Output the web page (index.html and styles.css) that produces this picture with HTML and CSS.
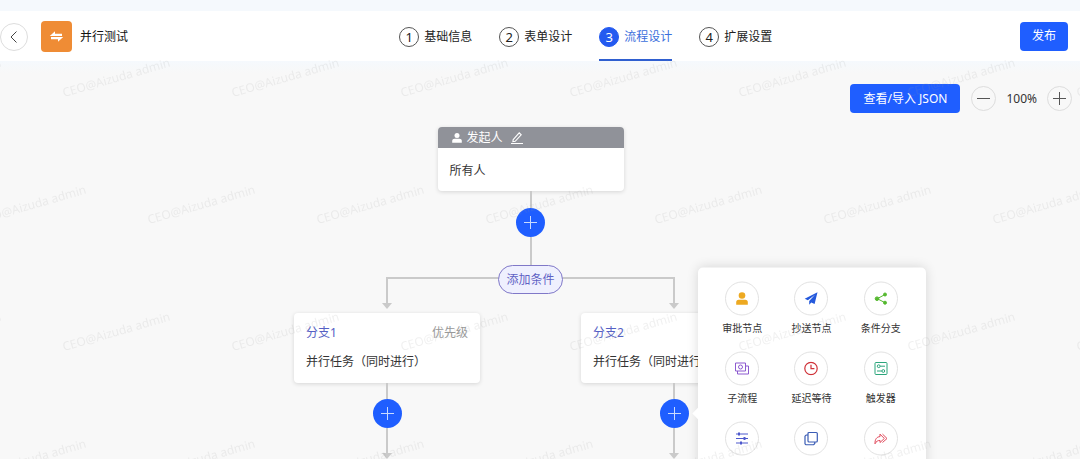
FILE: index.html
```html
<!DOCTYPE html>
<html lang="zh-CN">
<head>
<meta charset="utf-8">
<meta name="viewport" content="width=device-width, initial-scale=1">
<title>并行测试</title>
<link rel="stylesheet" href="styles.css">
</head>
<body>
<header class="header">
  <div class="brand">
    <button class="back" type="button" aria-label="返回">
      <svg width="14" height="14" viewBox="0 0 14 14" fill="none" stroke="#444" stroke-width="1"><path d="M9.500 1.500 4 7l5.500 5.500"/></svg>
    </button>
    <span class="logo">
      <svg width="15" height="15" viewBox="0 0 15 15" fill="#fff"><path d="M.8 6.900 6 2.200v2.500h7v2.200zM14.200 8.100 9 12.800v-2.500H2V8.100z"/></svg>
    </span>
    <h1 class="title">并行测试</h1>
  </div>
  <nav class="steps">
    <a class="step" href="#base"><span class="step-no">1</span>基础信息</a>
    <a class="step" href="#form"><span class="step-no">2</span>表单设计</a>
    <a class="step step-active" href="#flow" aria-current="step"><span class="step-no">3</span>流程设计</a>
    <a class="step" href="#more"><span class="step-no">4</span>扩展设置</a>
  </nav>
  <div class="actions"><button class="primary" type="button">发布</button></div>
</header>

<main class="canvas">
  <div class="toolbar">
    <button class="primary primary-wide" type="button">查看/导入 JSON</button>
    <div class="zoom">
      <button class="zoom-btn" type="button" aria-label="缩小">
        <svg width="13" height="13" viewBox="0 0 13 13" stroke="#555"><path d="M0 6.500h13"/></svg>
      </button>
      <span class="zoom-value">100%</span>
      <button class="zoom-btn" type="button" aria-label="放大">
        <svg width="13" height="13" viewBox="0 0 13 13" stroke="#555"><path d="M0 6.500h13M6.500 0v13"/></svg>
      </button>
    </div>
  </div>

  <div class="flow">
    <section class="card">
      <div class="card-head">
        <svg width="10" height="10" viewBox="0 0 10 10" fill="#fff"><circle cx="5" cy="2.600" r="2.500"/><path d="M.2 9.800V8c0-1.400 1-2.300 2.400-2.300h4.800c1.400 0 2.400.9 2.400 2.300v1.800z"/></svg>
        <span>发起人</span>
        <button class="edit" type="button" aria-label="编辑">
          <svg width="12" height="12" viewBox="0 0 12 12" fill="none" stroke="#fff" stroke-width="1.100"><path d="M2.200 7.600 8.200.9l2 1.900-6 6.500-2.300.4zM0 11.500h12"/></svg>
        </button>
      </div>
      <p class="card-body">所有人</p>
    </section>
    <div class="link">
      <span class="line line-in"></span>
      <button class="add" type="button" aria-label="添加节点"><svg width="13" height="13" viewBox="0 0 13 13" stroke="#c9dbff"><path d="M0 6.500h13M6.500 0v13"/></svg></button>
      <span class="line line-out"></span>
    </div>
    <button class="condition" type="button">添加条件</button>

    <div class="branches">
      <div class="branch">
        <span class="rail rail-first"></span>
        <span class="arrow"></span>
        <section class="card branch-card">
          <div class="branch-head"><span class="branch-name">分支1</span><span class="priority">优先级</span></div>
          <p class="branch-task">并行任务（同时进行）</p>
        </section>
        <div class="link">
          <span class="line line-in"></span>
          <button class="add" type="button" aria-label="添加节点"><svg width="13" height="13" viewBox="0 0 13 13" stroke="#c9dbff"><path d="M0 6.500h13M6.500 0v13"/></svg></button>
          <span class="line line-out"></span>
        </div>
        <span class="arrow"></span>
      </div>
      <div class="branch">
        <span class="rail rail-last"></span>
        <span class="arrow"></span>
        <section class="card branch-card">
          <div class="branch-head"><span class="branch-name">分支2</span></div>
          <p class="branch-task">并行任务（同时进行）</p>
        </section>
        <div class="link">
          <span class="line line-in"></span>
          <div class="anchor">
            <button class="add" type="button" aria-label="添加节点" aria-expanded="true"><svg width="13" height="13" viewBox="0 0 13 13" stroke="#c9dbff"><path d="M0 6.500h13M6.500 0v13"/></svg></button>
            <div class="popover">
              <button class="option" type="button"><span class="option-icon">
                <svg width="14" height="14" viewBox="0 0 14 14" fill="#eda921"><circle cx="7" cy="4" r="3.300"/><path d="M1.200 13.200v-2.600c0-1.500.9-2.400 2.400-2.400h6.800c1.500 0 2.400.9 2.400 2.400v2.600z"/></svg>
              </span>审批节点</button>
              <button class="option" type="button"><span class="option-icon">
                <svg width="14" height="14" viewBox="0 0 14 14" fill="#2459dc"><path d="M13.500.8.700 7.300l3.200 1.500L11 3.200 5.200 9.500v3.800l2.100-2.400 3.300 1.500z"/></svg>
              </span>抄送节点</button>
              <button class="option" type="button"><span class="option-icon">
                <svg width="14" height="14" viewBox="0 0 14 14" fill="#55b92f" stroke="#55b92f"><path d="M11 3 3.300 7.200 11 11.200" fill="none"/><circle cx="11" cy="3" r="1.500"/><circle cx="3" cy="7.200" r="1.800"/><circle cx="11" cy="11.200" r="1.500"/></svg>
              </span>条件分支</button>
              <button class="option" type="button"><span class="option-icon">
                <svg width="14" height="14" viewBox="0 0 14 14" fill="none" stroke="#8d5bd0"><path d="M.5 1.500h10v8H.5zM2.500 9.500v3h11V4.500h-3"/><circle cx="5.500" cy="5.500" r="2"/></svg>
              </span>子流程</button>
              <button class="option" type="button"><span class="option-icon">
                <svg width="14" height="14" viewBox="0 0 14 14" fill="none" stroke="#cf3037" stroke-width="1.200"><circle cx="7" cy="7" r="6.200"/><path d="M7 3.200v4h3.400"/></svg>
              </span>延迟等待</button>
              <button class="option" type="button"><span class="option-icon">
                <svg width="14" height="14" viewBox="0 0 14 14" fill="none" stroke="#2ba57b"><rect x="1" y="1" width="12" height="12" rx="1"/><circle cx="4.700" cy="4.700" r="1.400"/><path d="M6.100 4.700H11M3 9.500h4.900"/><circle cx="9.300" cy="9.500" r="1.400"/></svg>
              </span>触发器</button>
              <button class="option" type="button" aria-label="包容分支"><span class="option-icon">
                <svg width="14" height="14" viewBox="0 0 14 14" fill="none" stroke="#4d58cc"><path d="M1 2.500h12M1 7h12M1 11.500h12"/><path d="M4 1v3M9.500 5.500v3M6 10v3" stroke-width="2"/></svg>
              </span></button>
              <button class="option" type="button" aria-label="并行分支"><span class="option-icon">
                <svg width="14" height="14" viewBox="0 0 14 14" fill="none" stroke="#3a5cb5" stroke-width="1.200"><rect x="4" y="1" width="9.300" height="9.500" rx="1"/><path d="M4 3.500H2.200L1 4.700v7.600l1 1h7.500l1.300-1.300v-1.500"/></svg>
              </span></button>
              <button class="option" type="button" aria-label="路由分支"><span class="option-icon">
                <svg width="14" height="14" viewBox="0 0 14 14" fill="none" stroke="#e04a5c" stroke-linejoin="round"><path d="M1 12.300c-.2-4.300 1.600-7 5-7.200V2.600l4.300 4.400L6 11V8.900c-2.300 0-3.800 1-5 3.400zM8.500 2.600 13 7l-4.500 4"/></svg>
              </span></button>
            </div>
          </div>
          <span class="line line-out"></span>
        </div>
        <span class="arrow"></span>
      </div>
    </div>
  </div>
</main>

<svg class="watermark" aria-hidden="true">
  <defs>
    <pattern id="mark" x="60" y="50" width="169" height="254" patternUnits="userSpaceOnUse">
      <g class="mark-text">
        <text transform="translate(4 47) rotate(-16)">CEO@Aizuda admin</text>
        <text transform="translate(89 174) rotate(-16)">CEO@Aizuda admin</text>
        <text transform="translate(-80 174) rotate(-16)">CEO@Aizuda admin</text>
      </g>
    </pattern>
  </defs>
  <rect width="100%" height="100%" fill="url(#mark)"/>
</svg>
</body>
</html>
```
FILE: styles.css
```css
* { box-sizing: border-box; }

body {
  margin: 0;
  height: 100vh;
  overflow: hidden;
  display: flex;
  flex-direction: column;
  background: #f8f8f8;
  border-top: 11px solid #f5f9fd;
  color: #333;
  font: 12px/18px "Noto Sans", "Noto Sans CJK SC", sans-serif;
}

button {
  font: inherit;
  color: inherit;
  padding: 0;
  border: 0;
  background: none;
  cursor: pointer;
}

svg { display: block; flex: none; }
p, h1 { margin: 0; }

/* Header */
.header {
  display: flex;
  flex: none;
  height: 50px;
  padding-right: 12px;
  background: #fff;
}

.brand {
  display: flex;
  flex: 27 1 0;
  align-items: center;
  padding-top: 1px;
}

.back {
  display: grid;
  place-items: center;
  width: 28px;
  height: 28px;
  margin-right: 13px;
  border: 1px solid #ddd;
  border-radius: 50%;
}

.logo {
  display: grid;
  place-items: center;
  width: 31px;
  height: 31px;
  margin-right: 8px;
  border-radius: 4px;
  background: #ef8c35;
}

.title { font-size: 12px; font-weight: 400; color: #111; }

.steps { display: flex; gap: 27px; }

.step {
  display: flex;
  align-items: center;
  gap: 5px;
  border-bottom: 2px solid transparent;
  padding-top: 4px;
  color: #222;
  text-decoration: none;
}

.step-no {
  display: grid;
  place-items: center;
  width: 20px;
  height: 20px;
  border: 1px solid #555;
  border-radius: 50%;
  font-size: 13px;
}

.step-active { color: #3c6fdc; border-bottom-color: #2f5fd0; }
.step-active .step-no { background: #245af0; border-color: #245af0; color: #fff; }

.actions {
  display: flex;
  flex: 20 1 0;
  align-items: center;
  justify-content: flex-end;
}

.primary {
  height: 29px;
  padding: 0 12px;
  border-radius: 4px;
  background: #1f5eff;
  color: #fff;
}

.primary-wide { padding: 0 13px; }

/* Canvas */
.canvas {
  flex: 1;
  min-height: 0;
  overflow: hidden;
  padding-top: 23px;
  background: linear-gradient(#f5f9fd, #f8f8f8 12px);
}

.toolbar {
  display: flex;
  justify-content: flex-end;
  align-items: center;
  gap: 11px;
  padding-right: 8px;
}

.zoom { display: flex; align-items: center; gap: 10px; }

.zoom-btn {
  display: grid;
  place-items: center;
  width: 25px;
  height: 25px;
  border: 1px solid #ddd;
  border-radius: 50%;
}

.flow {
  display: flex;
  flex-direction: column;
  align-items: center;
  padding: 14px 19px 0 0;
}

.card {
  width: 186px;
  border-radius: 4px;
  background: #fff;
  box-shadow: 0 1px 4px rgba(0, 0, 0, 0.14);
}

.card-head {
  display: flex;
  align-items: center;
  gap: 5px;
  height: 21px;
  padding: 1px 14px 0;
  border-radius: 4px 4px 0 0;
  background: #909299;
  color: #fff;
}

.edit { margin-left: 3px; }
.card-body { padding: 14px 12px 11px; }

.branch-card { padding: 11px 12px 12px; margin-top: 4px; }
.branch-head { display: flex; justify-content: space-between; margin-bottom: 11px; }
.branch-name { color: #5560c4; }
.priority { color: #999; }
.branch-task { white-space: nowrap; }

/* Connectors */
.link { display: flex; flex-direction: column; align-items: center; }
.line { width: 2px; background: #cacaca; }
.line-in { height: 17px; }
.line-out { height: 28px; }
.branch .line-in { height: 16px; }
.branch .line-out { height: 25px; }

.add {
  display: grid;
  place-items: center;
  width: 29px;
  height: 29px;
  border-radius: 50%;
  background: #1f5eff;
}

.condition {
  z-index: 1;
  height: 29px;
  margin-bottom: -17px;
  padding: 0 7px;
  border: 1px solid #8078c8;
  border-radius: 15px;
  background: #eff0fe;
  color: #5f62c5;
}

.branches { display: grid; grid-template-columns: 287px 287px; }
.branch { display: flex; flex-direction: column; align-items: center; }

.rail {
  width: calc(50% + 1px);
  height: 26px;
  border-top: 2px solid #cacaca;
}

.rail-first { align-self: flex-end; border-left: 2px solid #cacaca; }
.rail-last { align-self: flex-start; border-right: 2px solid #cacaca; }

.arrow {
  border: 5px solid transparent;
  border-top: 6px solid #cacaca;
  border-bottom: 0;
}

/* Node menu */
.anchor { position: relative; }

.popover {
  position: absolute;
  z-index: 2;
  left: 38px;
  top: 50%;
  transform: translateY(-50%);
  display: grid;
  grid-template-columns: repeat(3, 1fr);
  grid-auto-rows: 54px;
  row-gap: 16px;
  width: 228px;
  min-height: 293px;
  padding: 14px 10px;
  border-radius: 5px;
  background: #fff;
  box-shadow: 0 0 12px rgba(0, 0, 0, 0.14);
}

.popover::before {
  content: "";
  position: absolute;
  left: -4px;
  top: 50%;
  width: 8px;
  height: 8px;
  background: #fff;
  transform: translateY(-50%) rotate(45deg);
}

.option {
  display: flex;
  flex-direction: column;
  align-items: center;
  gap: 4px;
  font-size: 10px;
  line-height: 16px;
}

.option-icon {
  display: grid;
  place-items: center;
  width: 34px;
  height: 34px;
  border: 1px solid #e2e2e2;
  border-radius: 50%;
}

/* Watermark */
.watermark {
  position: absolute;
  z-index: 3;
  inset: 0;
  width: 100%;
  height: 100%;
  pointer-events: none;
}

.mark-text { font-size: 12px; fill: #999; fill-opacity: 0.14; }
```
